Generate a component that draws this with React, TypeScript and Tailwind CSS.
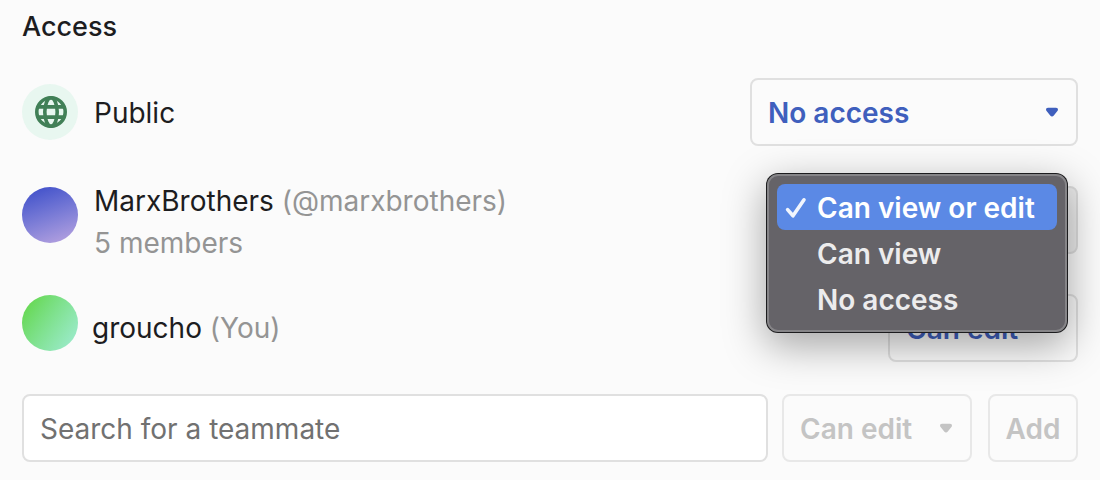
import type { ReactNode } from "react";

const controlText = "text-[28px] leading-8 font-semibold";

function Caret({ className }: { className: string }) {
  return (
    <svg
      viewBox="0 0 12 10"
      aria-hidden="true"
      className={`pointer-events-none absolute top-1/2 right-5 h-[10px] w-3 -translate-y-1/2 ${className}`}
    >
      <path d="M2 0.7H10C12 0.7 12.6 2.8 11.2 4.3L7.8 8.4C6.8 9.7 5.2 9.7 4.2 8.4L0.8 4.3C-0.6 2.8 0 0.7 2 0.7Z" fill="currentColor" />
    </svg>
  );
}

type PickerProps = {
  label: string;
  value: string;
  options: string[];
  width: string;
  tone?: string;
  disabled?: boolean;
  children?: ReactNode;
};

function Picker({ label, value, options, width, tone, disabled, children }: PickerProps) {
  return (
    <div className={`relative shrink-0 ${width}`}>
      <select
        aria-label={label}
        defaultValue={value}
        disabled={disabled}
        className={`block h-17 w-full appearance-none rounded-lg border-2 pt-[2px] pl-4 opacity-100 ${controlText} ${
          tone ?? "border-[#e0e0e0] bg-[#fbfbfb] text-[#3f5fbd]"
        }`}
      >
        {options.map((option) => (
          <option key={option}>{option}</option>
        ))}
      </select>
      <Caret className={disabled ? "text-[#c4c4c4]" : "text-[#3f5fbd]"} />
      {children}
    </div>
  );
}

const teamOptions = ["Can view or edit", "Can view", "No access"];

function TeamMenu() {
  return (
    <ul
      role="listbox"
      aria-label="Team access options"
      className="absolute -top-3 right-[11px] z-10 w-[300px] rounded-[11px] border-2 border-[#868588] bg-[#656368] p-2 shadow-[0_0_0_1px_#1c1c1e,0_12px_40px_2px_rgba(0,0,0,0.34)]"
    >
      {teamOptions.map((option, index) => (
        <li key={option} role="option" aria-selected={index === 0}>
          <button
            type="button"
            className={`flex h-[46px] w-full items-center rounded-lg pt-[2px] text-left whitespace-nowrap ${controlText} ${
              index === 0 ? "bg-[#5b89e5] text-white" : "text-[#ececed]"
            }`}
          >
            <span className="flex w-10 shrink-0 pl-2">
              {index === 0 && (
                <svg viewBox="0 0 22 22" aria-hidden="true" className="size-[22px]">
                  <path d="M2.6 12.6L8 18.8L19 2.8" fill="none" stroke="#f1f5fd" strokeWidth="3.6" strokeLinecap="round" strokeLinejoin="round" />
                </svg>
              )}
            </span>
            {option}
          </button>
        </li>
      ))}
    </ul>
  );
}

function Globe() {
  return (
    <svg viewBox="0 0 32 32" aria-hidden="true" className="ml-[2px] size-8" fill="none" stroke="#418057" strokeWidth="3.6">
      <circle cx="16" cy="16" r="14.2" />
      <ellipse cx="16" cy="16" rx="6.2" ry="14.2" />
      <path d="M2 10.9H30M2 21.1H30" />
    </svg>
  );
}

export default function App() {
  return (
    <main className="min-h-screen bg-[#fbfbfb] px-[22px] pt-[9px] pb-[18px] font-['Inter',sans-serif] text-[28px] leading-[42px] text-[#1d1d1f]">
      <h1 className="h-9 text-[27px] leading-9 font-medium">Access</h1>
      <div className="mt-[33px] flex flex-col gap-10">
        <section className="flex h-17 items-center">
          <div className="flex size-14 items-center justify-center rounded-full bg-[#e8f7f0]">
            <Globe />
          </div>
          <span className="ml-4 flex-1 pt-[2px]">Public</span>
          <Picker label="Public access" value="No access" options={["No access", "Can view"]} width="w-[328px]" />
        </section>

        <section className="flex h-17 items-center">
          <div className="mb-[10px] size-14 rounded-full bg-linear-160 from-[#4654cb] from-10% to-[#bca5e0]" />
          <div className="ml-4 flex-1 pt-1 text-[#949494]">
            <p>
              <span className="text-[#1d1d1f]">MarxBrothers</span> (@marxbrothers)
            </p>
            <p>5 members</p>
          </div>
          <Picker
            label="MarxBrothers access"
            value="Can view or edit"
            options={teamOptions}
            width="w-[290px]"
            tone="border-[#dcdcdc] bg-[#ececec] text-[#3f5fbd]"
          >
            <TeamMenu />
          </Picker>
        </section>

        <section className="flex h-17 items-center">
          <div className="mb-[10px] size-14 rounded-full bg-linear-125 from-[#66d84e] from-10% to-[#a1ecd6]" />
          <p className="ml-[14px] flex-1 text-[#949494]">
            <span className="text-[#1d1d1f]">groucho</span> (You)
          </p>
          <Picker label="groucho access" value="Can edit" options={["Can edit", "Can view"]} width="w-[190px]" />
        </section>
      </div>

      <form className="mt-8 flex">
        <input
          type="text"
          aria-label="Search for a teammate"
          placeholder="Search for a teammate"
          className="h-17 min-w-0 flex-1 rounded-lg border-2 border-[#e0e0e0] bg-white px-4 pt-[2px] text-[28px] placeholder:text-[#717171]"
        />
        <div className="ml-[14px]">
          <Picker
            label="New teammate access"
            value="Can edit"
            options={["Can edit", "Can view"]}
            width="w-[190px]"
            tone="border-[#e8e8e8] bg-[#fbfbfb] text-[#c4c4c4]"
            disabled
          />
        </div>
        <button
          type="button"
          disabled
          className={`ml-4 h-17 w-[90px] rounded-lg border-2 border-[#e8e8e8] pt-[2px] text-[#c4c4c4] ${controlText}`}
        >
          Add
        </button>
      </form>
    </main>
  );
}
